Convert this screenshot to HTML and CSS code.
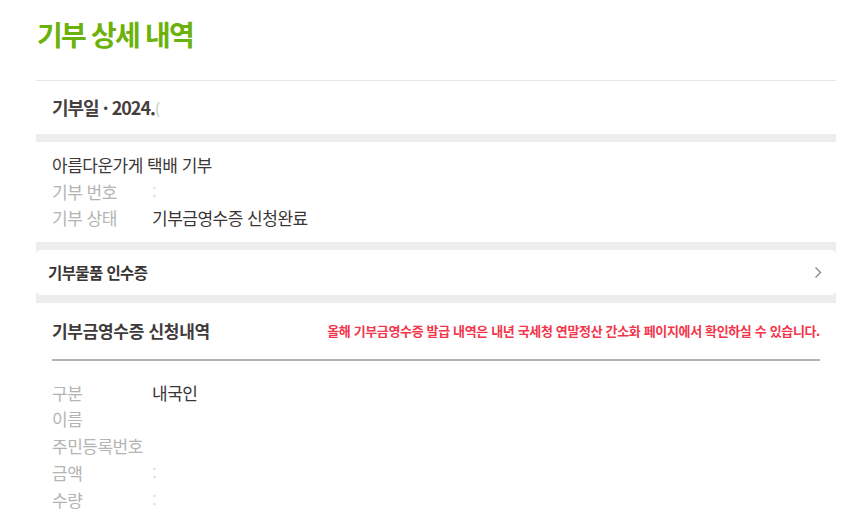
FILE: index.html
```html
<!DOCTYPE html>
<html lang="ko">
<head>
<meta charset="utf-8">
<title>기부 상세 내역</title>
<link rel="stylesheet" href="styles.css">
</head>
<body>
<div class="page">
  <h1 class="title">기부 상세 내역</h1>

  <div class="date-row">기부일 · 2024.<span class="partial">(</span></div>

  <div class="info">
    <div class="info-name">아름다운가게 택배 기부</div>
    <div class="info-row"><span class="label">기부 번호</span><span class="faint">:</span></div>
    <div class="info-row"><span class="label">기부 상태</span><span class="value">기부금영수증 신청완료</span></div>
  </div>

  <div class="card-wrap">
    <a class="card" href="#">
      <span class="card-title">기부물품 인수증</span>
      <svg class="chev" width="8" height="13" viewBox="0 0 8 13"><path d="M1.5 1.5 L6.5 6.5 L1.5 11.5" fill="none" stroke="#8a8a8a" stroke-width="1.4"/></svg>
    </a>
  </div>

  <div class="receipt">
    <div class="receipt-head">
      <h2 class="receipt-title">기부금영수증 신청내역</h2>
      <p class="notice">올해 기부금영수증 발급 내역은 내년 국세청 연말정산 간소화 페이지에서 확인하실 수 있습니다.</p>
    </div>
    <div class="rows">
      <div class="info-row"><span class="label">구분</span><span class="value">내국인</span></div>
      <div class="info-row"><span class="label">이름</span></div>
      <div class="info-row"><span class="label">주민등록번호</span></div>
      <div class="info-row"><span class="label">금액</span><span class="faint">:</span></div>
      <div class="info-row"><span class="label">수량</span><span class="faint">:</span></div>
    </div>
  </div>
</div>
</body>
</html>
```

FILE: styles.css
```css
* { box-sizing: border-box; }
html, body { margin: 0; padding: 0; background: #fff; }
body {
  font-family: "Noto Sans CJK KR", "Noto Sans", sans-serif;
  color: #444;
}
.page {
  width: 800px;
  margin-left: 36px;
  padding-top: 16px;
}
.title {
  margin: 0 0 28px 0;
  font-size: 28px;
  line-height: 36px;
  font-weight: 700;
  color: #6cb10c;
  letter-spacing: -1.8px;
  padding-left: 1px;
}
.date-row {
  border-top: 1px solid #e8e8e8;
  height: 53px;
  line-height: 53px;
  padding-left: 16px;
  font-size: 18px;
  font-weight: 700;
  color: #454040;
  letter-spacing: -1px;
  border-bottom: 8px solid #ededed;
  box-sizing: content-box;
}
.partial {
  color: #c4c4c4;
  font-weight: 400;
  font-size: 15px;
}
.info {
  padding: 10px 16px;
  font-size: 17px;
  line-height: 26.5px;
  letter-spacing: -0.5px;
}
.info-name { color: #3d3838; }
.info-row { display: flex; }
.label {
  width: 100px;
  flex: none;
  color: #b4b4b4;
}
.value { color: #3a3535; }
.faint { color: #dcdcdc; }
.card-wrap {
  background: #ededed;
  padding: 8px 0;
}
.card {
  display: flex;
  align-items: center;
  justify-content: space-between;
  height: 45px;
  background: #fff;
  border-radius: 5px;
  padding: 0 14px 0 12px;
  text-decoration: none;
}
.card-title {
  font-size: 15.5px;
  font-weight: 700;
  color: #3a3535;
  letter-spacing: -0.6px;
}
.chev { display: block; }
.receipt { padding: 0 16px; }
.receipt-head {
  display: flex;
  align-items: center;
  justify-content: space-between;
  height: 58px;
  border-bottom: 2px solid #b3b3b3;
}
.receipt-title {
  margin: 0;
  font-size: 17px;
  font-weight: 700;
  color: #403b3b;
  letter-spacing: -0.3px;
}
.notice {
  margin: 0;
  font-size: 13px;
  font-weight: 700;
  color: #f3364b;
  letter-spacing: -0.35px;
}
.rows {
  padding-top: 19px;
  font-size: 17px;
  line-height: 26.8px;
  letter-spacing: -0.5px;
}
```
